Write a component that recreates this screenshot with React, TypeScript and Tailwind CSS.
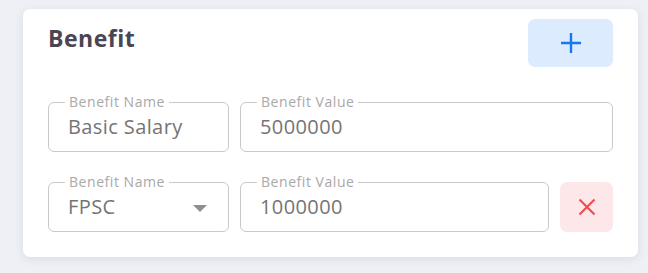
import React from "react";

function Field({
  label,
  value,
  width,
  select,
}: {
  label: string;
  value: string;
  width: string;
  select?: boolean;
}) {
  return (
    <div
      className={`relative ${width} h-[50px] rounded-[6px] border border-[#c9c9c9] flex items-center pl-[19px] pr-[20px]`}
    >
      <span className="absolute left-[16px] top-[-10px] bg-white px-[4px] text-[14px] leading-[18px] tracking-[0.55px] text-[#a8a8a8]">
        {label}
      </span>
      <span className="text-[20px] leading-[24px] tracking-[0.4px] text-[#747474] flex-1">{value}</span>
      {select && (
        <svg width="14" height="7" viewBox="0 0 14 7" className="mr-[1px] mt-[2px]">
          <path d="M0 0 L14 0 L7 7 Z" fill="#8f8f8f" />
        </svg>
      )}
    </div>
  );
}

export default function App() {
  return (
    <div
      className="w-[648px] h-[273px] bg-[#eef0f5] pt-[9px] pl-[23px] [font-variant-ligatures:none]"
      style={{ fontFamily: "'Open Sans', Lato, sans-serif" }}
    >
      <div className="w-[615px] h-[248px] bg-white rounded-[7px] shadow-[0_2px_8px_rgba(60,70,110,0.12)] pt-[10px] px-[25px]">
        <div className="flex items-start justify-between">
          <h2 className="mt-[5px] text-[23px] leading-[28px] tracking-[0.5px] font-bold text-[#4a4553]">Benefit</h2>
          <button className="w-[85px] h-[48px] rounded-[7px] bg-[#dcebfd] flex items-center justify-center">
            <svg width="22" height="22" viewBox="0 0 22 22">
              <path d="M11 1 V21 M1 11 H21" stroke="#1677f0" strokeWidth="2.4" />
            </svg>
          </button>
        </div>
        <div className="mt-[35px] flex gap-[11px]">
          <Field label="Benefit Name" value="Basic Salary" width="w-[181px]" />
          <Field label="Benefit Value" value="5000000" width="w-[373px]" />
        </div>
        <div className="mt-[30px] flex gap-[11px]">
          <Field label="Benefit Name" value="FPSC" width="w-[181px]" select />
          <Field label="Benefit Value" value="1000000" width="w-[309px]" />
          <button className="w-[53px] h-[50px] rounded-[7px] bg-[#fde7e9] flex items-center justify-center">
            <svg width="18" height="18" viewBox="0 0 18 18">
              <path d="M1.5 1.5 L16.5 16.5 M16.5 1.5 L1.5 16.5" stroke="#f24b52" strokeWidth="2.2" />
            </svg>
          </button>
        </div>
      </div>
    </div>
  );
}
